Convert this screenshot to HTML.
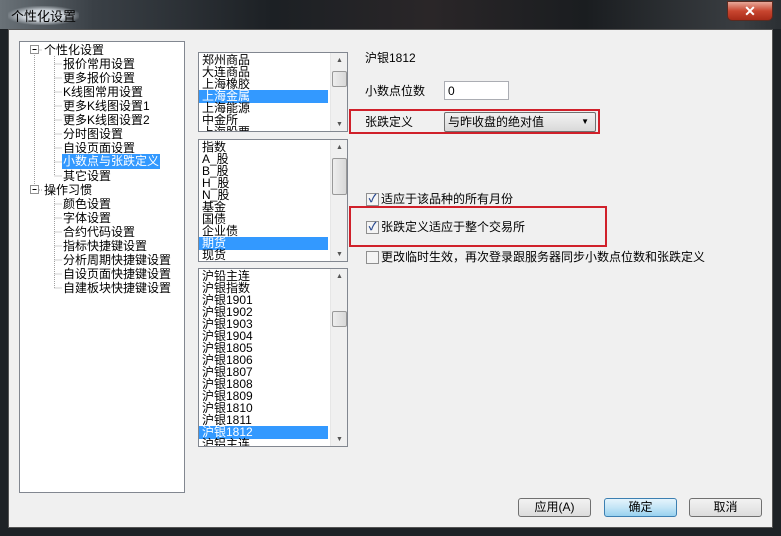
<!DOCTYPE html>
<html><head><meta charset="utf-8"><style>
*{margin:0;padding:0;box-sizing:border-box}
body{width:781px;height:536px;overflow:hidden;background:#1e2226;font-family:"Liberation Sans","Noto Sans CJK SC","WenQuanYi Zen Hei",sans-serif;font-size:12px;color:#000;position:relative}
.title{position:absolute;left:0;top:0;width:781px;height:29px;background:linear-gradient(90deg,#6a7278 0%,#3a4046 12%,#1c2024 35%,#2a2628 55%,#1a1d20 75%,#3a3e42 95%,#2b2f33 100%)}
.title span{position:absolute;left:8px;top:6px;font-size:13px;color:#000;padding:0 3px;background:radial-gradient(ellipse at center,rgba(230,236,242,.85) 40%,rgba(230,236,242,0) 75%)}
.close{position:absolute;left:727px;top:1px;width:46px;height:20px;border:1px solid #5a2a20;border-radius:0 0 5px 5px;background:linear-gradient(#e8a89a,#c8452f 50%,#a82a18);color:#fff;font-weight:bold;text-align:center;font-size:14px;line-height:18px}
.client{position:absolute;left:8px;top:29px;width:765px;height:499px;background:#f0f0f0;border:1px solid #555}
.a{position:absolute}
.box{position:absolute;background:#fff;border:1px solid #828790}
.row{position:absolute;left:0;height:13px;line-height:13px;white-space:nowrap}
.sel{background:#3399ff;color:#fff}
.sb{position:absolute;right:0;top:0;width:17px;bottom:0;background:#f0f0f0;border-left:1px solid #e6e6e6}
.thumb{position:absolute;left:1px;width:15px;background:linear-gradient(90deg,#eee,#d8d8d8);border:1px solid #999;border-radius:2px}
.arr{position:absolute;left:5px;font-size:7px;color:#555}
.btn{position:absolute;top:498px;width:73px;height:19px;border:1px solid #707070;border-radius:3px;background:linear-gradient(#f2f2f2,#e8e8e8 50%,#dcdcdc);text-align:center;line-height:17px}
.cb{position:absolute;width:13px;height:13px;border:1px solid #8f8f8f;background:#f4f4f4;font-size:11px;line-height:11px;text-align:center;color:#2a4a90;font-weight:bold}
.red{position:absolute;border:2px solid #d0202a}
.t{position:absolute;white-space:nowrap;height:14px;line-height:14px}
</style></head><body>
<div class="title"><span>个性化设置</span></div>
<div class="close">✕</div>
<div class="client"></div>

<div class="box" style="left:19px;top:41px;width:166px;height:452px">
<svg class="a" style="left:0;top:0" width="60" height="260">
<g stroke="#a0a0a0" stroke-dasharray="1,1" fill="none">
<path d="M14.5 13 V147 M14.5 8 H22 M34.5 14 V134 M34.5 22H42 M34.5 36H42 M34.5 50H42 M34.5 64H42 M34.5 78H42 M34.5 92H42 M34.5 106H42 M34.5 120H42 M34.5 134H42 M34.5 155 V246 M34.5 162H42 M34.5 176H42 M34.5 190H42 M34.5 204H42 M34.5 218H42 M34.5 232H42 M34.5 246H42 M17 148H22"/>
</g>
<g stroke="#919191" fill="#fff"><rect x="10.5" y="3.5" width="8" height="8"/><rect x="10.5" y="143.5" width="8" height="8"/></g>
<path d="M12.5 7.5H16.5 M12.5 147.5H16.5" stroke="#000"/>
</svg>
<div class="t" style="left:24px;top:1px">个性化设置</div>
<div class="t" style="left:43px;top:15px">报价常用设置</div>
<div class="t" style="left:43px;top:29px">更多报价设置</div>
<div class="t" style="left:43px;top:43px">K线图常用设置</div>
<div class="t" style="left:43px;top:57px">更多K线图设置1</div>
<div class="t" style="left:43px;top:71px">更多K线图设置2</div>
<div class="t" style="left:43px;top:85px">分时图设置</div>
<div class="t" style="left:43px;top:99px">自设页面设置</div>
<div class="t sel" style="left:42px;top:112px;padding:0 1px;height:15px">小数点与张跌定义</div>
<div class="t" style="left:43px;top:127px">其它设置</div>
<div class="t" style="left:24px;top:141px">操作习惯</div>
<div class="t" style="left:43px;top:155px">颜色设置</div>
<div class="t" style="left:43px;top:169px">字体设置</div>
<div class="t" style="left:43px;top:183px">合约代码设置</div>
<div class="t" style="left:43px;top:197px">指标快捷键设置</div>
<div class="t" style="left:43px;top:211px">分析周期快捷键设置</div>
<div class="t" style="left:43px;top:225px">自设页面快捷键设置</div>
<div class="t" style="left:43px;top:239px">自建板块快捷键设置</div>
</div>

<div class="box" style="left:198px;top:52px;width:150px;height:80px;overflow:hidden">
<div class="row" style="top:1px;left:3px">郑州商品</div>
<div class="row" style="top:13px;left:3px">大连商品</div>
<div class="row" style="top:25px;left:3px">上海橡胶</div>
<div class="row sel" style="top:37px;width:129px;padding-left:3px">上海金属</div>
<div class="row" style="top:49px;left:3px">上海能源</div>
<div class="row" style="top:61px;left:3px">中金所</div>
<div class="row" style="top:73px;left:3px">上海股票</div>
<div class="sb"><span class="arr" style="top:4px">▲</span><div class="thumb" style="top:18px;height:16px"></div><span class="arr" style="bottom:3px">▼</span></div>
</div>

<div class="box" style="left:198px;top:139px;width:150px;height:123px;overflow:hidden">
<div class="row" style="top:1px;left:3px">指数</div>
<div class="row" style="top:13px;left:3px">A_股</div>
<div class="row" style="top:25px;left:3px">B_股</div>
<div class="row" style="top:37px;left:3px">H_股</div>
<div class="row" style="top:49px;left:3px">N_股</div>
<div class="row" style="top:61px;left:3px">基金</div>
<div class="row" style="top:73px;left:3px">国债</div>
<div class="row" style="top:85px;left:3px">企业债</div>
<div class="row sel" style="top:97px;width:129px;padding-left:3px">期货</div>
<div class="row" style="top:109px;left:3px">现货</div>
<div class="sb"><span class="arr" style="top:4px">▲</span><div class="thumb" style="top:18px;height:37px"></div><span class="arr" style="bottom:3px">▼</span></div>
</div>

<div class="box" style="left:198px;top:268px;width:150px;height:179px;overflow:hidden">
<div class="row" style="top:1px;left:3px">沪铅主连</div>
<div class="row" style="top:13px;left:3px">沪银指数</div>
<div class="row" style="top:25px;left:3px">沪银1901</div>
<div class="row" style="top:37px;left:3px">沪银1902</div>
<div class="row" style="top:49px;left:3px">沪银1903</div>
<div class="row" style="top:61px;left:3px">沪银1904</div>
<div class="row" style="top:73px;left:3px">沪银1805</div>
<div class="row" style="top:85px;left:3px">沪银1806</div>
<div class="row" style="top:97px;left:3px">沪银1807</div>
<div class="row" style="top:109px;left:3px">沪银1808</div>
<div class="row" style="top:121px;left:3px">沪银1809</div>
<div class="row" style="top:133px;left:3px">沪银1810</div>
<div class="row" style="top:145px;left:3px">沪银1811</div>
<div class="row sel" style="top:157px;width:129px;padding-left:3px">沪银1812</div>
<div class="row" style="top:169px;left:3px">沪铝主连</div>
<div class="sb"><span class="arr" style="top:4px">▲</span><div class="thumb" style="top:42px;height:16px"></div><span class="arr" style="bottom:3px">▼</span></div>
</div>

<div class="t" style="left:365px;top:51px">沪银1812</div>
<div class="t" style="left:365px;top:84px">小数点位数</div>
<div class="a" style="left:444px;top:81px;width:65px;height:19px;background:#fff;border:1px solid #abadb3;padding:2px 3px;line-height:14px">0</div>
<div class="red" style="left:349px;top:109px;width:251px;height:25px"></div>
<div class="t" style="left:365px;top:115px">张跌定义</div>
<div class="a" style="left:444px;top:112px;width:152px;height:20px;border:1px solid #707070;border-radius:2px;background:linear-gradient(#f2f2f2,#e6e6e6 50%,#d9d9d9);padding:2px 3px;line-height:14px">与昨收盘的绝对值<span style="position:absolute;right:6px;top:2px;font-size:8px">▼</span></div>

<div class="cb" style="left:366px;top:193px">✓</div>
<div class="t" style="left:381px;top:192px">适应于该品种的所有月份</div>
<div class="red" style="left:349px;top:206px;width:258px;height:41px"></div>
<div class="cb" style="left:366px;top:221px">✓</div>
<div class="t" style="left:381px;top:220px">张跌定义适应于整个交易所</div>
<div class="cb" style="left:366px;top:251px"></div>
<div class="t" style="left:381px;top:250px">更改临时生效，再次登录跟服务器同步小数点位数和张跌定义</div>

<div class="btn" style="left:518px">应用(A)</div>
<div class="btn" style="left:604px;border-color:#3c7fb1;background:linear-gradient(#e5f4fc,#c4e5f6 50%,#98d1ef)">确定</div>
<div class="btn" style="left:689px">取消</div>
</body></html>
